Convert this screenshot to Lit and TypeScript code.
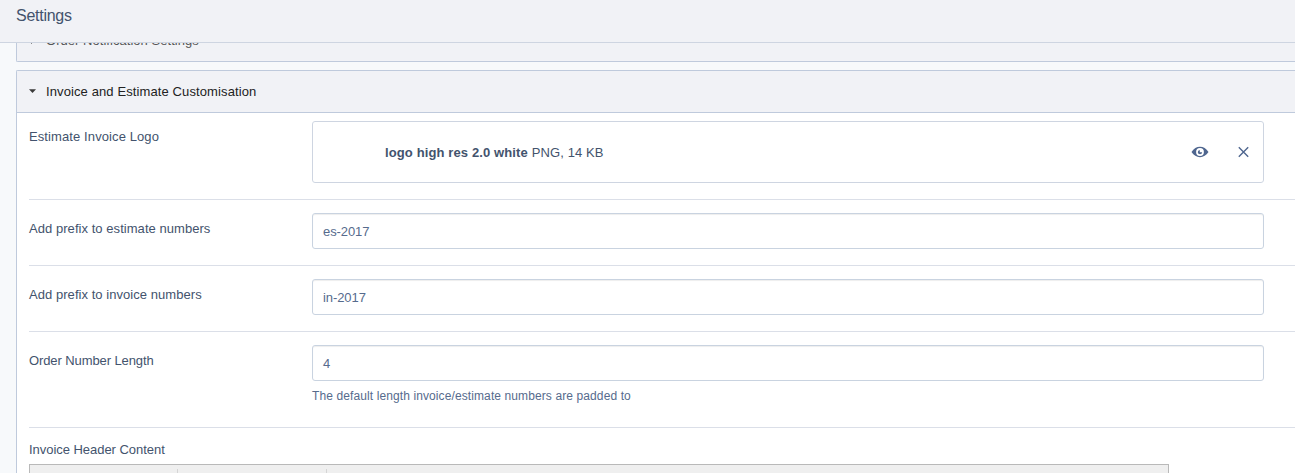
import { LitElement, html, css, nothing } from "lit";
import { customElement } from "lit/decorators.js";

interface TextField {
  label: string;
  value: string;
  tracking: string;
  hint?: string;
}

const FIELDS: TextField[] = [
  { label: "Add prefix to estimate numbers", value: "es-2017", tracking: "loose" },
  { label: "Add prefix to invoice numbers", value: "in-2017", tracking: "loose" },
  {
    label: "Order Number Length",
    value: "4",
    tracking: "tight",
    hint: "The default length invoice/estimate numbers are padded to",
  },
];

@customElement("app-root")
export class AppRoot extends LitElement {
  static styles = css`
    :host {
      display: flex;
      flex-direction: column;
      height: 473px;
      overflow: hidden;
      background: #f7f9fb;
      color: #43536d;
      font: 13px/18px "Liberation Sans", Arial, sans-serif;
    }
    * {
      box-sizing: border-box;
    }
    .top {
      flex: none;
      height: 43px;
      padding: 6px 16px 0;
      background: #f1f2f6;
      border-bottom: 1px solid #ced5e1;
      font-size: 16px;
      line-height: 20px;
      letter-spacing: -0.26px;
    }
    .scroll {
      flex: 1;
      min-height: 0;
      overflow: hidden;
      display: flex;
      flex-direction: column;
      justify-content: flex-end;
      padding-left: 16px;
    }
    .panel {
      flex: none;
      border: 1px solid #bfcadc;
      border-right: 0;
      border-radius: 2px 0 0 2px;
      background: #fff;
    }
    .closed {
      margin-bottom: 8px;
    }
    .open {
      height: 403px;
      border-bottom: 0;
      border-bottom-left-radius: 0;
      overflow: hidden;
    }
    .bar {
      display: flex;
      align-items: center;
      height: 41px;
      padding: 0 0 0 12px;
      gap: 10px;
      background: #f1f2f6;
      color: #222;
      letter-spacing: 0.11px;
    }
    .closed .bar {
      color: #555;
      letter-spacing: 0.04px;
    }
    .open .bar {
      height: 42px;
      border-bottom: 1px solid #bfcadc;
    }
    .arrow {
      display: block;
      width: 7px;
      height: 7px;
      fill: #3a3a3a;
    }
    .row {
      display: grid;
      grid-template-columns: 283px 952px;
      align-items: start;
      margin-left: 12px;
      padding: 13px 0 16px;
      border-bottom: 1px solid #dbdfe8;
    }
    .row.upload {
      padding: 8px 0 16px;
    }
    .row.hinted {
      padding-bottom: 22px;
    }
    .label {
      padding-top: 7px;
      letter-spacing: 0.1px;
    }
    .label.loose {
      letter-spacing: 0.05px;
    }
    .label.tight {
      letter-spacing: -0.1px;
    }
    .file {
      display: flex;
      align-items: center;
      height: 62px;
      padding: 0 14px 0 72px;
      border: 1px solid #ced5e1;
      border-radius: 3px;
    }
    .meta {
      flex: 1;
      padding-top: 2px;
      white-space: pre;
      letter-spacing: 0.12px;
    }
    .icon {
      display: block;
      flex: none;
    }
    .eye {
      margin-right: 29px;
    }
    .input {
      display: flex;
      align-items: center;
      height: 36px;
      padding: 1px 10px 0;
      border: 1px solid #c9d3e0;
      border-radius: 3px;
      box-shadow: inset 0 1px 1px rgba(0, 0, 0, 0.07);
      color: #566b8d;
      letter-spacing: -0.08px;
    }
    .hint {
      padding-top: 5px;
      color: #566b8d;
      font-size: 12px;
      line-height: 20px;
      height: 24px;
      letter-spacing: 0.105px;
    }
    .editor {
      padding: 13px 0 0 12px;
    }
    .caption {
      letter-spacing: -0.04px;
    }
    .toolbar {
      display: flex;
      width: 1140px;
      height: 30px;
      margin-top: 5px;
      padding-top: 4px;
      border: 1px solid #b9b9b9;
      background: #efefef;
    }
    .group {
      width: 149px;
      border-right: 1px solid #d5d5d5;
    }
    .group:first-child {
      width: 148px;
    }
  `;

  private bar(title: string, expanded: boolean) {
    return html`<div class="bar">
      <svg class="arrow" viewBox="0 0 7 7">
        <path d=${expanded ? "M0 1.200h7L3.500 5z" : "M2 0l4 3.500L2 7z"} />
      </svg>
      <span>${title}</span>
    </div>`;
  }

  private field(f: TextField) {
    return html`<div class="row ${f.hint ? "hinted" : ""}">
      <div class="label ${f.tracking}">${f.label}</div>
      <div>
        <div class="input">${f.value}</div>
        ${f.hint ? html`<div class="hint">${f.hint}</div>` : nothing}
      </div>
    </div>`;
  }

  render() {
    return html`
      <div class="top">Settings</div>
      <div class="scroll">
        <div class="panel closed">${this.bar("Order Notification Settings", false)}</div>
        <div class="panel open">
          ${this.bar("Invoice and Estimate Customisation", true)}
          <div class="row upload">
            <div class="label">Estimate Invoice Logo</div>
            <div class="file">
              <div class="meta"><b>logo high res 2.0 white</b> PNG, 14 KB</div>
              <svg class="icon eye" width="18" height="12" viewBox="0 0 18 12">
                <path
                  fill="#4f668f"
                  fill-rule="evenodd"
                  d="M.5 6C2.800 2.600 5.600 .8 9 .8S15.200 2.600 17.500 6C15.200 9.400 12.400 11.200 9 11.200S2.800 9.400 .5 6zM9 2.100a3.900 3.900 0 1 0 0 7.800 3.900 3.900 0 0 0 0-7.800z"
                />
                <path fill="#4f668f" d="M8.800 3.900v2.300h2.400A2.200 2.200 0 1 1 8.800 3.900z" />
              </svg>
              <svg class="icon" width="11" height="12" viewBox="0 0 11 12">
                <path d="M.8 1.300l9.400 9.400M10.200 1.300l-9.400 9.400" stroke="#4f668f" stroke-width="1.400" />
              </svg>
            </div>
          </div>
          ${FIELDS.map((f) => this.field(f))}
          <div class="editor">
            <div class="caption">Invoice Header Content</div>
            <div class="toolbar">
              <div class="group"></div>
              <div class="group"></div>
            </div>
          </div>
        </div>
      </div>
    `;
  }
}
